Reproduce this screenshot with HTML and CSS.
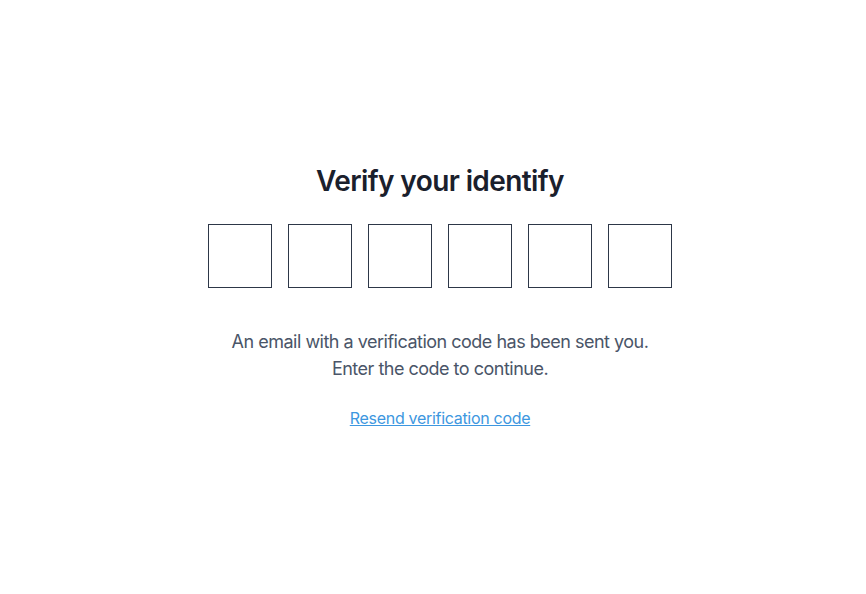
FILE: index.html
```html
<!DOCTYPE html>
<html lang="en">
<head>
<meta charset="utf-8">
<title>Verify your identify</title>
<link rel="stylesheet" href="styles.css">
</head>
<body>
<main class="page">
  <section class="verify">
    <h1 class="title">Verify your identify</h1>
    <div class="codes">
      <input class="code" type="text" maxlength="1">
      <input class="code" type="text" maxlength="1">
      <input class="code" type="text" maxlength="1">
      <input class="code" type="text" maxlength="1">
      <input class="code" type="text" maxlength="1">
      <input class="code" type="text" maxlength="1">
    </div>
    <p class="message">An email with a verification code has been sent you.<br>Enter the code to continue.</p>
    <a class="resend" href="#">Resend verification code</a>
  </section>
</main>
</body>
</html>
```

FILE: styles.css
```css
html, body {
  margin: 0;
  padding: 0;
  background: #ffffff;
}
body {
  font-family: Inter, "Noto Sans", "Liberation Sans", sans-serif;
}
.page {
  box-sizing: border-box;
  width: 100%;
  height: 594px;
  padding-left: 14px;
  padding-top: 163px;
  display: flex;
  justify-content: center;
}
.verify {
  display: flex;
  flex-direction: column;
  align-items: center;
}
.title {
  margin: 0;
  font-size: 28px;
  line-height: 36px;
  font-weight: 600;
  letter-spacing: -0.6px;
  color: #1a202c;
}
.codes {
  margin-top: 25px;
  display: flex;
  gap: 16px;
}
.code {
  box-sizing: border-box;
  width: 64px;
  height: 64px;
  margin: 0;
  padding: 0;
  border: 1px solid #2d3748;
  border-radius: 0;
  background: #fff;
  outline: none;
  font-family: inherit;
  font-size: 24px;
  text-align: center;
}
.message {
  margin: 40px 0 0;
  text-align: center;
  font-size: 18px;
  line-height: 27px;
  letter-spacing: -0.5px;
  color: #4a5568;
}
.resend {
  margin-top: 24px;
  font-size: 16px;
  line-height: 24px;
  letter-spacing: -0.3px;
  color: #3d97e0;
  text-decoration: underline;
}
```
